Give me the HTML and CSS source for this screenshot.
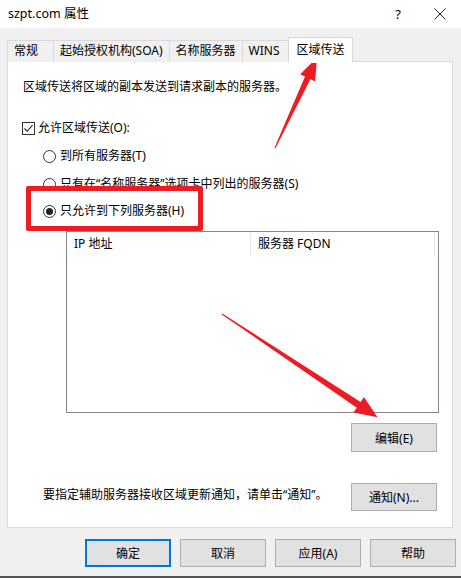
FILE: index.html
```html
<!DOCTYPE html>
<html lang="zh-CN">
<head>
    <meta charset="UTF-8">
    <meta name="viewport" content="width=device-width, initial-scale=1.0">
    <title>szpt.com 属性</title>
    <link rel="stylesheet" href="styles.css">
</head>
<body>
    <div class="window">
        <div class="titlebar">
            <span class="title">szpt.com 属性</span>
            <span class="title-help">?</span>
            <span class="title-close">
                <svg width="12" height="12" viewBox="0 0 12 12"><path d="M0.5 0.5 L11.5 11.5 M11.5 0.5 L0.5 11.5" stroke="#222" stroke-width="1" fill="none"/></svg>
            </span>
        </div>

        <div class="dialog">
            <div class="tabs">
                <div class="tab">常规</div>
                <div class="tab">起始授权机构(SOA)</div>
                <div class="tab">名称服务器</div>
                <div class="tab">WINS</div>
                <div class="tab active">区域传送</div>
            </div>

            <div class="panel">
                <p class="desc">区域传送将区域的副本发送到请求副本的服务器。</p>

                <label class="check-row">
                    <span class="checkbox">
                        <svg width="11" height="11" viewBox="0 0 11 11"><path d="M1.5 5.5 L4.2 8.3 L9.5 2.2" stroke="#222" stroke-width="1.1" fill="none"/></svg>
                    </span>
                    允许区域传送(O):
                </label>

                <label class="radio-row first">
                    <span class="radio"></span>
                    到所有服务器(T)
                </label>
                <label class="radio-row">
                    <span class="radio"></span>
                    只有在“名称服务器”选项卡中列出的服务器(S)
                </label>
                <label class="radio-row last">
                    <span class="radio checked"></span>
                    只允许到下列服务器(H)
                </label>

                <div class="list">
                    <div class="list-head">
                        <div class="col">IP 地址</div>
                        <div class="col">服务器 FQDN</div>
                    </div>
                </div>

                <div class="edit-row">
                    <button class="btn">编辑(E)</button>
                </div>

                <div class="notify-row">
                    <span>要指定辅助服务器接收区域更新通知，请单击“通知”。</span>
                    <button class="btn">通知(N)...</button>
                </div>
            </div>

            <div class="footer">
                <button class="btn default">确定</button>
                <button class="btn">取消</button>
                <button class="btn">应用(A)</button>
                <button class="btn">帮助</button>
            </div>
        </div>

        <!-- annotations drawn over the screenshot -->
        <div class="mark-box"></div>
        <svg class="arrows" width="461" height="578" viewBox="0 0 461 578">
            <polygon fill="#ec1c24" points="274.5,147.8 305,76.6 300.2,74.2 317,57.5 315.2,81.6 310.4,79.2 275.5,148.2"/>
            <polygon fill="#ec1c24" points="222.3,313.6 360.6,401.9 363.9,397 377.5,417.3 353.4,412.6 356.8,407.7 221.7,314.4"/>
        </svg>
    </div>
</body>
</html>
```

FILE: styles.css
```css
* {
    box-sizing: border-box;
}

body {
    margin: 0;
    font-family: 'Noto Sans', 'Noto Sans CJK SC', sans-serif;
    font-size: 12px;
    line-height: 16px;
    color: #000;
    background-color: #f0f0f0;
}

.window {
    position: relative;
    width: 461px;
    height: 578px;
    background-color: #f0f0f0;
    border-bottom: 2px solid #555;
    overflow: hidden;
}

.titlebar {
    height: 28px;
    background-color: #fff;
    display: flex;
    align-items: center;
    padding-left: 8px;
}

.title {
    flex: 1;
    font-size: 12.5px;
}

.title-help {
    width: 20px;
    text-align: center;
    margin-right: 26px;
    font-size: 13px;
}

.title-close {
    width: 12px;
    height: 12px;
    margin-right: 15px;
    display: flex;
}

.dialog {
    padding: 9px 8px 0 7px;
}

.tabs {
    display: flex;
    align-items: flex-end;
    height: 25px;
    position: relative;
    z-index: 1;
}

.tab {
    min-width: 47px;
    height: 22px;
    padding: 0 6px;
    line-height: 20px;
    background-color: #f0f0f0;
    border: 1px solid #d9d9d9;
    border-bottom: none;
    margin-right: -1px;
    white-space: nowrap;
}

.tab.active {
    line-height: 23px;
    padding: 0 7px 0 8px;
    background-color: #fff;
    margin-bottom: -1px;
    height: 26px;
}

.panel {
    background-color: #fff;
    border: 1px solid #d9d9d9;
    margin-top: -1px;
    height: 467px;
    padding: 17px 15px 0 15px;
}

.desc {
    margin: 0;
}

.check-row,
.radio-row {
    display: flex;
    align-items: center;
    height: 16px;
}

.check-row {
    margin-top: 25px;
    margin-left: -1px;
}

.checkbox {
    width: 13px;
    height: 13px;
    border: 1px solid #333;
    margin-right: 3px;
    display: flex;
    align-items: center;
    justify-content: center;
}

.radio-row {
    margin-top: 12px;
    margin-left: 20px;
}

.radio-row.last {
    margin-top: 11px;
}

.radio {
    width: 13px;
    height: 13px;
    border: 1px solid #333;
    border-radius: 50%;
    margin-right: 4px;
    display: flex;
    align-items: center;
    justify-content: center;
}

.radio.checked::after {
    content: "";
    width: 7px;
    height: 7px;
    border-radius: 50%;
    background-color: #222;
}

.list {
    margin: 12px -2px 0 43px;
    height: 182px;
    border: 1px solid #828790;
    background-color: #fff;
}

.list-head {
    display: flex;
    height: 23px;
    margin-top: 1px;
}

.list-head .col {
    width: 184px;
    padding-left: 7px;
    line-height: 22px;
    border-right: 1px solid #e5e5e5;
}

.btn {
    font-family: inherit;
    font-size: 12px;
    width: 86px;
    height: 29px;
    padding: 0;
    background-color: #e1e1e1;
    border: 1px solid #adadad;
    color: #000;
}

.edit-row {
    display: flex;
    justify-content: flex-end;
    margin-top: 10px;
}

.notify-row {
    display: flex;
    align-items: center;
    justify-content: space-between;
    margin-top: 31px;
    padding-left: 20px;
}

.notify-row span {
    margin-top: -4px;
}

.notify-row .btn {
    height: 28px;
}

.footer {
    display: flex;
    justify-content: flex-end;
    gap: 9px;
    margin-top: 11px;
    margin-right: -3px;
}

.footer .btn {
    height: 28px;
}

.footer .btn.default {
    border: 2px solid #0078d7;
}

.mark-box {
    position: absolute;
    left: 26px;
    top: 186px;
    width: 177px;
    height: 45px;
    border: 5px solid #ec1c24;
    border-radius: 2px;
}

.arrows {
    position: absolute;
    left: 0;
    top: 0;
    pointer-events: none;
}
```
